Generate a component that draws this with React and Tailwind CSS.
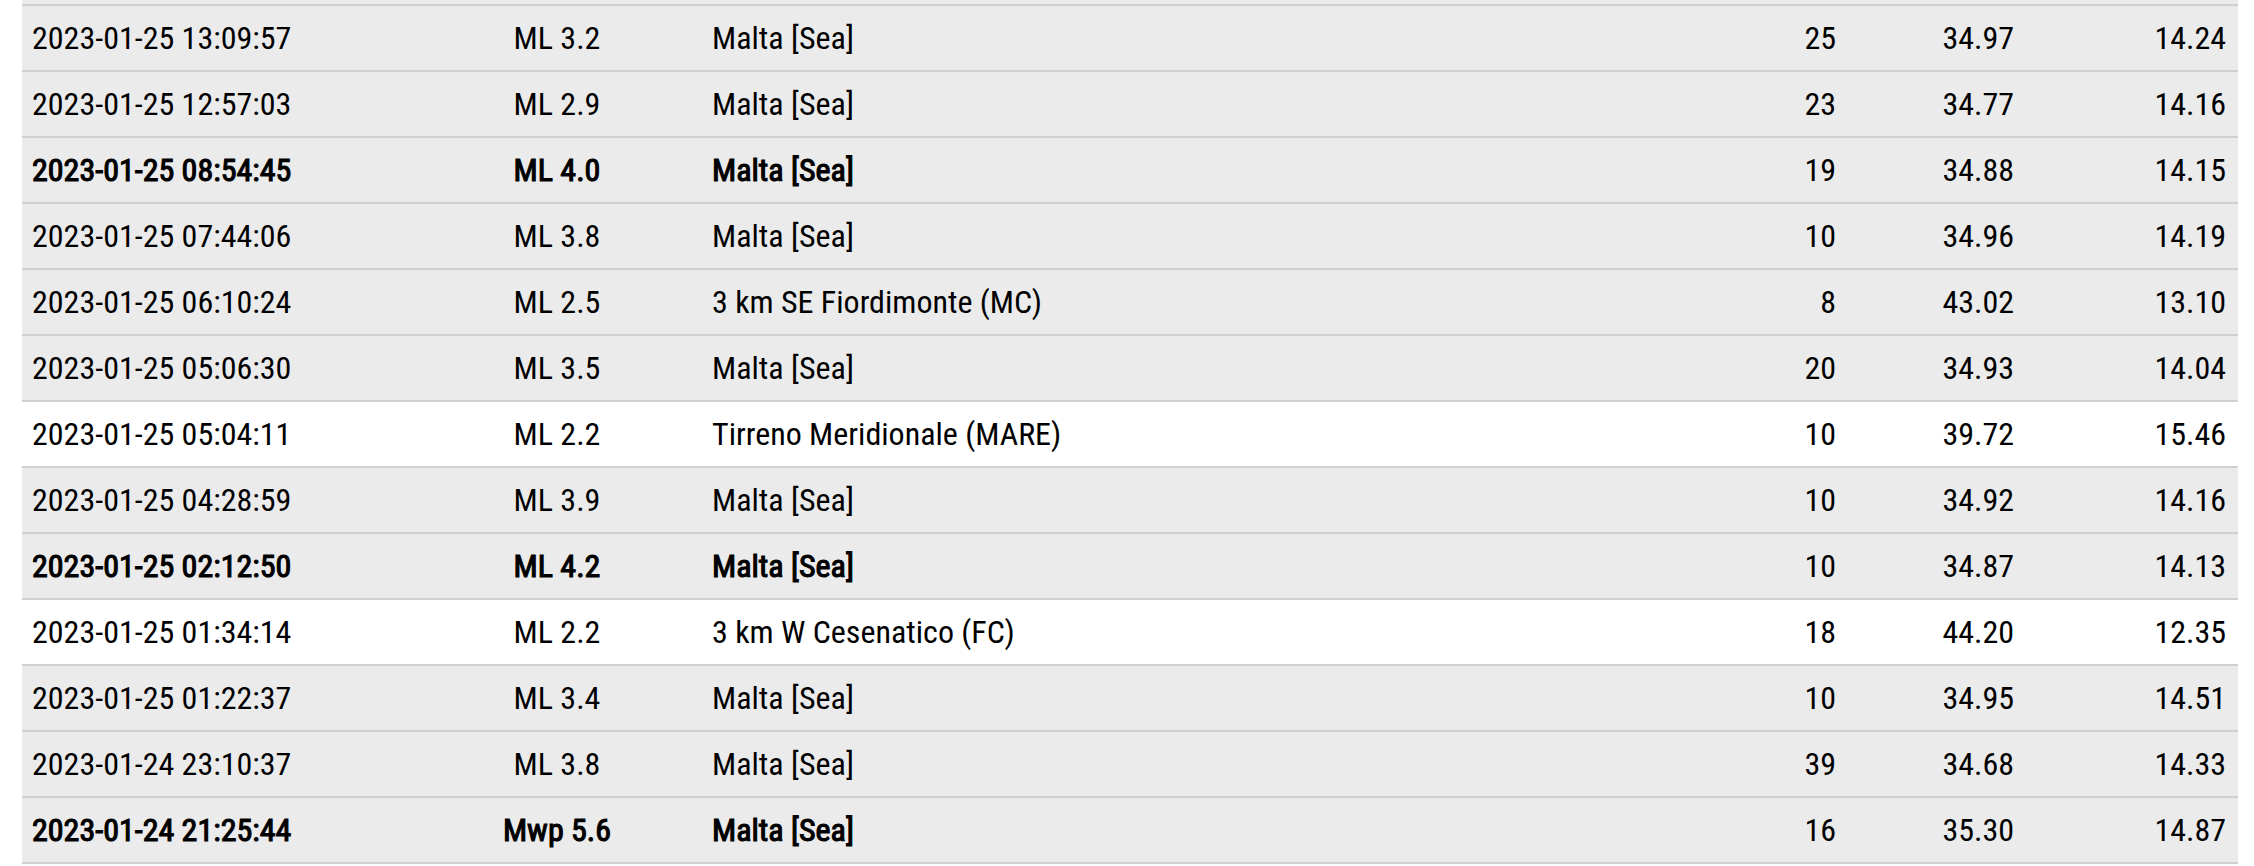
const rows = [
  ["2023-01-25 13:09:57", "ML 3.2", "Malta [Sea]", "25", "34.97", "14.24", false, false],
  ["2023-01-25 12:57:03", "ML 2.9", "Malta [Sea]", "23", "34.77", "14.16", false, false],
  ["2023-01-25 08:54:45", "ML 4.0", "Malta [Sea]", "19", "34.88", "14.15", true, false],
  ["2023-01-25 07:44:06", "ML 3.8", "Malta [Sea]", "10", "34.96", "14.19", false, false],
  ["2023-01-25 06:10:24", "ML 2.5", "3 km SE Fiordimonte (MC)", "8", "43.02", "13.10", false, false],
  ["2023-01-25 05:06:30", "ML 3.5", "Malta [Sea]", "20", "34.93", "14.04", false, false],
  ["2023-01-25 05:04:11", "ML 2.2", "Tirreno Meridionale (MARE)", "10", "39.72", "15.46", false, true],
  ["2023-01-25 04:28:59", "ML 3.9", "Malta [Sea]", "10", "34.92", "14.16", false, false],
  ["2023-01-25 02:12:50", "ML 4.2", "Malta [Sea]", "10", "34.87", "14.13", true, false],
  ["2023-01-25 01:34:14", "ML 2.2", "3 km W Cesenatico (FC)", "18", "44.20", "12.35", false, true],
  ["2023-01-25 01:22:37", "ML 3.4", "Malta [Sea]", "10", "34.95", "14.51", false, false],
  ["2023-01-24 23:10:37", "ML 3.8", "Malta [Sea]", "39", "34.68", "14.33", false, false],
  ["2023-01-24 21:25:44", "Mwp 5.6", "Malta [Sea]", "16", "35.30", "14.87", true, false],
];

export default function App() {
  return (
    <div
      className="w-[2254px] h-[866px] bg-white pl-[22px] pr-[16px] text-black overflow-hidden"
      style={{ fontFamily: "'Roboto Condensed', Roboto, 'Liberation Sans', sans-serif" }}
    >
      <div className="h-[4px] bg-[#ebebeb]" />
      <div className="border-b-2 border-[#d0d0d0]">
        {rows.map(([date, mag, loc, depth, lat, lon, bold, white], i) => {
          const b = bold ? "[-webkit-text-stroke:1.1px_#000]" : "";
          return (
            <div
              key={i}
              className={`grid grid-cols-[440px_190px_996px_200px_178px_212px] h-[66px] border-t-2 border-[#d0d0d0] text-[32px] leading-[64px] ${white ? "bg-white" : "bg-[#ebebeb]"}`}
            >
              <div className={`pl-[10px] ${b}`}>{date}</div>
              <div className={`text-center ${b}`}>{mag}</div>
              <div className={`pl-[60px] ${b}`}>{loc}</div>
              <div className="text-right pr-[12px]">{depth}</div>
              <div className="text-right pr-[12px]">{lat}</div>
              <div className="text-right pr-[12px]">{lon}</div>
            </div>
          );
        })}
      </div>
    </div>
  );
}
